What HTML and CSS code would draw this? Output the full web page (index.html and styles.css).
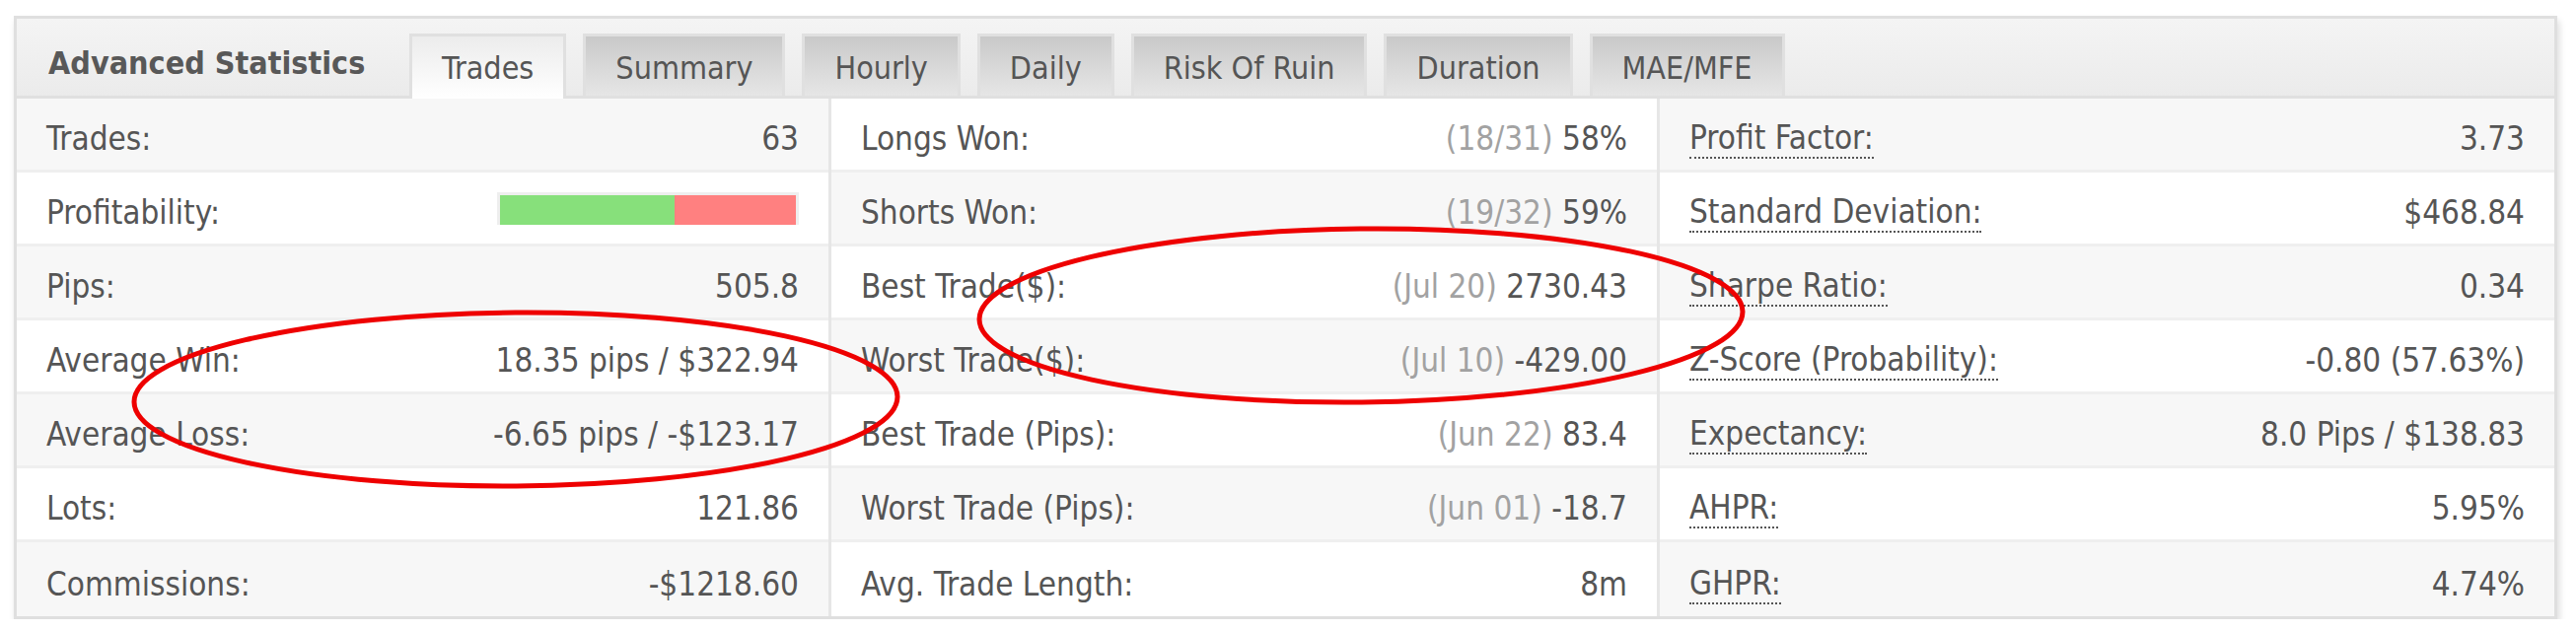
FILE: index.html
```html
<!DOCTYPE html>
<html lang="en">
<head>
  <meta charset="UTF-8">
  <title>Advanced Statistics</title>
  <link rel="stylesheet" href="styles.css">
</head>
<body>
  <div id="stats">
    <div class="stats-head">
      <h2 class="stats-title">Advanced Statistics</h2>
      <ul class="tabs">
        <li class="tab active">Trades</li>
        <li class="tab">Summary</li>
        <li class="tab">Hourly</li>
        <li class="tab">Daily</li>
        <li class="tab">Risk Of Ruin</li>
        <li class="tab">Duration</li>
        <li class="tab">MAE/MFE</li>
      </ul>
    </div>
    <div class="stats-body">
      <div class="col">
        <div class="row"><span class="label">Trades:</span><span class="value">63</span></div>
        <div class="row"><span class="label">Profitability:</span>
          <span class="bar"><span class="bar-win" style="width: 59%"></span><span class="bar-loss"></span></span>
        </div>
        <div class="row"><span class="label">Pips:</span><span class="value">505.8</span></div>
        <div class="row"><span class="label">Average Win:</span><span class="value">18.35 pips / $322.94</span></div>
        <div class="row"><span class="label">Average Loss:</span><span class="value">-6.65 pips / -$123.17</span></div>
        <div class="row"><span class="label">Lots:</span><span class="value">121.86</span></div>
        <div class="row"><span class="label">Commissions:</span><span class="value">-$1218.60</span></div>
      </div>
      <div class="col col-shift">
        <div class="row"><span class="label">Longs Won:</span><span class="value"><span class="note">(18/31)</span> 58%</span></div>
        <div class="row"><span class="label">Shorts Won:</span><span class="value"><span class="note">(19/32)</span> 59%</span></div>
        <div class="row"><span class="label">Best Trade($):</span><span class="value"><span class="note">(Jul 20)</span> 2730.43</span></div>
        <div class="row"><span class="label">Worst Trade($):</span><span class="value"><span class="note">(Jul 10)</span> -429.00</span></div>
        <div class="row"><span class="label">Best Trade (Pips):</span><span class="value"><span class="note">(Jun 22)</span> 83.4</span></div>
        <div class="row"><span class="label">Worst Trade (Pips):</span><span class="value"><span class="note">(Jun 01)</span> -18.7</span></div>
        <div class="row"><span class="label">Avg. Trade Length:</span><span class="value">8m</span></div>
      </div>
      <div class="col">
        <div class="row"><span class="label hint">Profit Factor:</span><span class="value">3.73</span></div>
        <div class="row"><span class="label hint">Standard Deviation:</span><span class="value">$468.84</span></div>
        <div class="row"><span class="label hint">Sharpe Ratio:</span><span class="value">0.34</span></div>
        <div class="row"><span class="label hint">Z-Score (Probability):</span><span class="value">-0.80 (57.63%)</span></div>
        <div class="row"><span class="label hint">Expectancy:</span><span class="value">8.0 Pips / $138.83</span></div>
        <div class="row"><span class="label hint">AHPR:</span><span class="value">5.95%</span></div>
        <div class="row"><span class="label hint">GHPR:</span><span class="value">4.74%</span></div>
      </div>
    </div>
  </div>

  <!-- hand drawn marks on top of the screenshot -->
  <svg class="marks" width="2612" height="641" viewBox="0 0 2612 641">
    <ellipse cx="523" cy="405" rx="387" ry="88" transform="rotate(-0.4 523 405)"></ellipse>
    <ellipse cx="1380" cy="320" rx="387" ry="88" transform="rotate(-0.6 1380 320)"></ellipse>
  </svg>
</body>
</html>
```

FILE: styles.css
```css
body {
  margin: 0;
  position: relative;
  background-color: white;
  color: #555;
  font-family: "DejaVu Sans Condensed", "DejaVu Sans", sans-serif;
  font-stretch: condensed;
  font-size: 33px;
}
#stats {
  box-sizing: border-box;
  width: 2579px;
  margin: 16px 0 0 14px;
  border: 3px solid #dfdfdf;
  background-color: white;
  box-shadow: 2px 5px 7px rgba(0, 0, 0, 0.14);
}
.stats-head {
  box-sizing: border-box;
  height: 81px;
  display: flex;
  background: linear-gradient(#f4f4f4, #ebebeb);
  border-bottom: 3px solid #e0e0e0;
}
.stats-title {
  box-sizing: border-box;
  width: 398px;
  margin: 0;
  padding: 12px 0 0 32px;
  align-self: center;
  font-size: 32px;
  font-weight: bold;
  color: #585858;
}
.tabs {
  display: flex;
  gap: 17px;
  align-self: flex-end;
  margin: 0;
  padding: 0;
  list-style: none;
  font-size: 32px;
}
.tab {
  box-sizing: border-box;
  height: 63px;
  display: flex;
  align-items: center;
  padding: 4px 30px 0;
  border: 3px solid #e0e0e0;
  border-bottom: none;
  background: linear-gradient(#c9c9c9, #e6e6e6);
}
.tab.active {
  height: 66px;
  margin-bottom: -3px;
  padding-bottom: 3px;
  background: linear-gradient(#ececec, #ffffff);
}
.stats-body {
  display: grid;
  grid-template-columns: 823px 840px 910px;
}
.col + .col {
  border-left: 3px solid #e6e6e6;
}
.row {
  box-sizing: border-box;
  height: 75px;
  display: flex;
  align-items: center;
  justify-content: space-between;
  padding: 9px 30px 0;
  border-bottom: 3px solid #efefef;
}
.row:last-child {
  border-bottom: none;
}
.row:nth-child(odd) {
  background-color: #f7f7f7;
}
.col-shift .row:nth-child(odd) {
  background-color: white;
}
.col-shift .row:nth-child(even) {
  background-color: #f7f7f7;
}
.note {
  color: #a2a2a2;
}
.hint {
  border-bottom: 2px dotted #555;
}
.bar {
  display: flex;
  width: 300px;
  height: 30px;
  margin-top: -9px;
  border: 3px solid #eeeeee;
  border-bottom: none;
}
.bar-win {
  background-color: #87e07b;
}
.bar-loss {
  flex: 1;
  background-color: #ff8080;
}
.marks {
  position: absolute;
  top: 0;
  left: 0;
  pointer-events: none;
}
.marks ellipse {
  fill: none;
  stroke: #ee0000;
  stroke-width: 5;
}
```
